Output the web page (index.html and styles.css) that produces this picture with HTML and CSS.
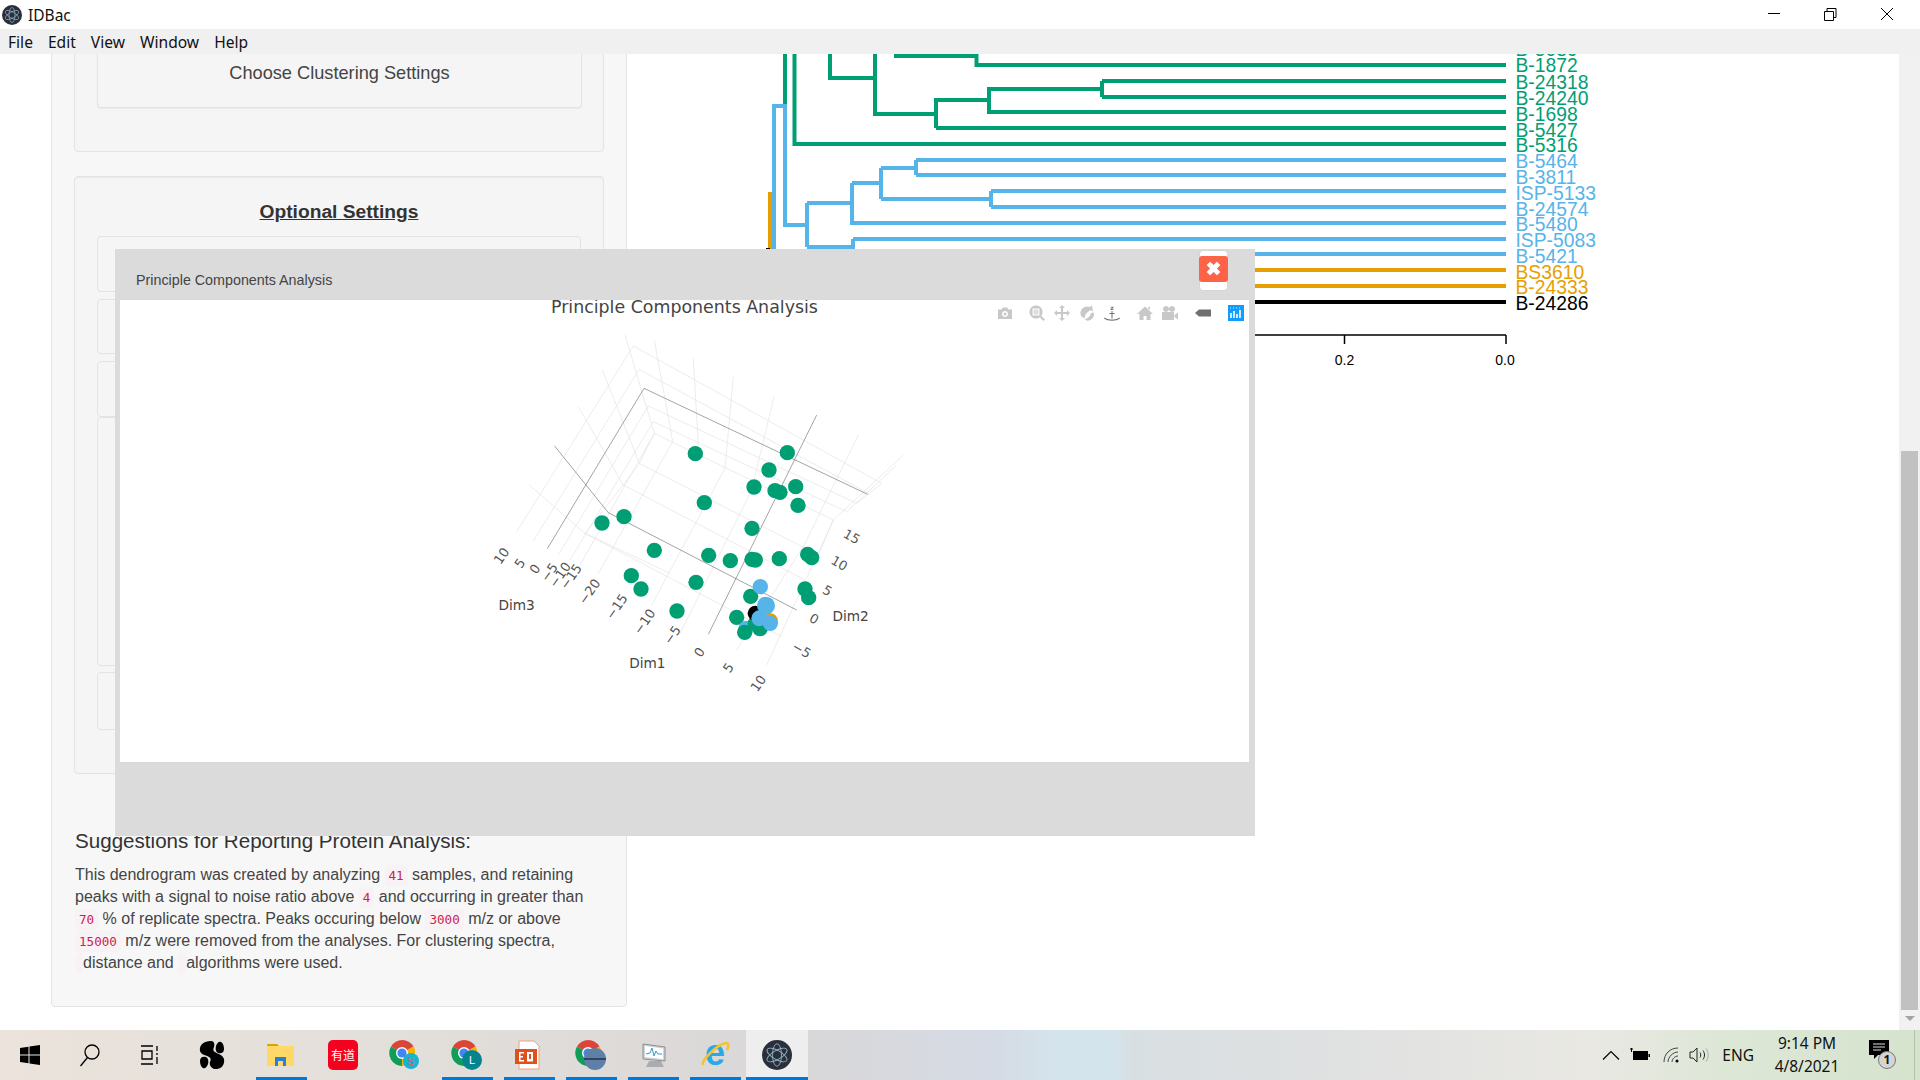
FILE: index.html
```html
<!DOCTYPE html>
<html>
<head>
  <title>IDBac</title>
  <link rel="stylesheet" href="styles.css">
</head>
<body>
  <svg class="defs" width="0" height="0">
    <symbol id="chrome" viewBox="0 0 26 26">
      <path d="M13 13 L2 6.5 A13 13 0 0 1 24.5 6.5 Z" fill="#db4437"/>
      <path d="M13 13 L24.5 6.5 A13 13 0 0 1 13 26 Z" fill="#f4b400"/>
      <path d="M13 13 L13 26 A13 13 0 0 1 2 6.5 Z" fill="#0f9d58"/>
      <circle cx="13" cy="13" r="6" fill="#fff"/>
      <circle cx="13" cy="13" r="4.6" fill="#4285f4"/>
    </symbol>
  </svg>

  <div class="container">
    <!-- Title bar -->
    <div class="title-bar">
      <svg class="app-icon" viewBox="0 0 20 20">
        <circle cx="10" cy="10" r="10" fill="#2b2e3b"/>
        <g fill="none" stroke="#8fb5c0" stroke-width="0.7">
          <ellipse cx="10" cy="10" rx="7.5" ry="3" transform="rotate(30 10 10)"/>
          <ellipse cx="10" cy="10" rx="7.5" ry="3" transform="rotate(90 10 10)"/>
          <ellipse cx="10" cy="10" rx="7.5" ry="3" transform="rotate(150 10 10)"/>
        </g>
      </svg>
      <span class="app-name">IDBac</span>
      <div class="window-controls">
        <svg viewBox="0 0 58 29" class="win-btn"><path d="M25 13.5H37" stroke="#000"/></svg>
        <svg viewBox="0 0 58 29" class="win-btn"><path d="M23.5 11.5h9v9h-9zM26 11.5V8.5h9v9h-2.500" fill="none" stroke="#000"/></svg>
        <svg viewBox="0 0 58 29" class="win-btn"><path d="M22 8L34 20M34 8L22 20" stroke="#000"/></svg>
      </div>
    </div>

    <!-- Menu bar -->
    <div class="menu-bar">
      <span>File</span>
      <span>Edit</span>
      <span>View</span>
      <span>Window</span>
      <span>Help</span>
    </div>

    <!-- Page, scrolled part way down -->
    <div class="content">
      <div class="well">
        <div class="card first-card">
          <div class="inner-card choose">Choose Clustering Settings</div>
        </div>

        <div class="card options-card">
          <h4 class="options-title">Optional Settings</h4>
          <div class="stub h56"></div>
          <div class="stub h55"></div>
          <div class="stub h56 no-gap"></div>
          <div class="stub h249"></div>
          <div class="stub h58"></div>
        </div>

        <h4 class="report-title">Suggestions for Reporting Protein Analysis:</h4>
        <p class="report-text">This dendrogram was created by analyzing <code>41</code> samples, and retaining peaks with a signal to noise ratio above <code>4</code> and occurring in greater than <code>70</code> % of replicate spectra. Peaks occuring below <code>3000</code> m/z or above <code>15000</code> m/z were removed from the analyses. For clustering spectra,<br><code></code>distance and <code></code>algorithms were used.</p>
      </div>

      <!-- Dendrogram, drawn in page coordinates -->
      <svg class="dendrogram" viewBox="627 54 1272 976">
        <g fill="none" stroke-width="4" stroke-linejoin="miter">
          <g stroke="#009E73">
            <path d="M785 54V106M794.500 54V144H1506"/>
            <path d="M830 54V78H875M875 54V114H936M936 128V100H989M936 128H1506"/>
            <path d="M989 89V112H1506M989 100V89H1102M1102 81V97M1102 81H1506M1102 97H1506"/>
            <path d="M896 54V56H976.500M976.500 54V65H1506"/>
          </g>
          <g stroke="#56B4E9">
            <path d="M774 250V106H785V225H807M807 203V247M807 203H852M852 183V223H1506"/>
            <path d="M852 183H881M881 168V199M881 168H916M916 160V175M916 160H1506M916 175H1506"/>
            <path d="M881 199H991M991 191V207M991 191H1506M991 207H1506"/>
            <path d="M807 247H853M853 239V254H1506M853 239H1506"/>
          </g>
          <g stroke="#E69F00">
            <path d="M770 192V270H1506M770 286H1506"/>
          </g>
          <path d="M768 248V302H1506" stroke="#000"/>
        </g>
        <path d="M1100 335H1506M1344.500 335V344M1506 335V344" fill="none" stroke="#000" stroke-width="1.500"/>
        <g class="axis-label">
          <text x="1344.500" y="365">0.2</text>
          <text x="1505" y="365">0.0</text>
        </g>
        <g class="leaf green">
          <text x="1515.500" y="56">B-5089</text>
          <text x="1515.500" y="72">B-1872</text>
          <text x="1515.500" y="89">B-24318</text>
          <text x="1515.500" y="105">B-24240</text>
          <text x="1515.500" y="121">B-1698</text>
          <text x="1515.500" y="137">B-5427</text>
          <text x="1515.500" y="152">B-5316</text>
        </g>
        <g class="leaf blue">
          <text x="1515.500" y="168">B-5464</text>
          <text x="1515.500" y="184">B-3811</text>
          <text x="1515.500" y="200">ISP-5133</text>
          <text x="1515.500" y="216">B-24574</text>
          <text x="1515.500" y="231">B-5480</text>
          <text x="1515.500" y="247">ISP-5083</text>
          <text x="1515.500" y="263">B-5421</text>
        </g>
        <g class="leaf orange">
          <text x="1515.500" y="279">BS3610</text>
          <text x="1515.500" y="294">B-24333</text>
        </g>
        <g class="leaf black">
          <text x="1515.500" y="310">B-24286</text>
        </g>
      </svg>

      <!-- Scrollbar -->
      <div class="scrollbar">
        <div class="scroll-thumb"></div>
        <div class="scroll-arrow"></div>
      </div>

      <!-- PCA modal -->
      <div class="modal">
        <div class="modal-head">
          <span class="modal-title">Principle Components Analysis</span>
          <button class="close-button">
            <span class="close-red">
              <svg viewBox="2.500 2.500 11 11" width="15" height="15"><path d="M3 5.500L5.500 3 8 5.500 10.500 3 13 5.500 10.500 8 13 10.500 10.500 13 8 10.500 5.500 13 3 10.500 5.500 8Z" fill="#fff"/></svg>
            </span>
          </button>
        </div>
        <div class="modal-body">
          <div class="plot-title">Principle Components Analysis</div>

          <div class="modebar">
            <svg class="tool" viewBox="0 0 16 16"><path fill-rule="evenodd" d="M1 4.500h3.500L6 2.500h4L11.500 4.500H15v9.500H1ZM8 6a3 3 0 1 0 .01 0ZM8 7.500a1.500 1.500 0 1 1-.01 0Z"/></svg>
            <svg class="tool gap-m" viewBox="0 0 16 16"><path fill-rule="evenodd" d="M7 0.500a6.500 6.500 0 1 1-.01 0ZM3.500 3.500v7h7v-7Z"/><path d="M4.500 4.500h5v5h-5Z" opacity="0.6"/><path d="M10.500 12l1.500-1.500 4 4L14.500 16Z"/></svg>
            <svg class="tool gap-s" viewBox="0 0 16 16"><path d="M8 0l3 3H9v4h4V5l3 3-3 3V9H9v4h2l-3 3-3-3h2V9H3v2L0 8l3-3v2h4V3H5Z"/></svg>
            <svg class="tool gap-s" viewBox="0 0 16 16"><path d="M13 0.500l1 6-2-1.200C9 6 6 9 5.500 13.500 2 12 0.500 9 2 5.500 3.500 2 8 0.500 11 2ZM14.500 7.500c1.500 3-.5 7-4.500 8-2.500.5-4-.5-4-1.500 3-.5 5.500-3 6-6Z"/></svg>
            <svg class="tool gap-s dark" viewBox="0 0 16 16"><text x="8" y="5" class="z-text">z</text><path d="M7.500 6h1v7.500h-1ZM5.500 8h5v1h-5ZM0.500 12.500c2 1.500 4.500 2 7.500 2s5.500-.5 7.500-2l.5 1c-2 1.500-5 2.200-8 2.200S2 15 0 13.500Z"/></svg>
            <svg class="tool gap-l" viewBox="0 0 16 16"><path d="M8 1.500l8 7.500h-2.500v6H9.500v-4h-3v4H2.500V9H0ZM11 2h2v3l-2-2Z"/></svg>
            <svg class="tool gap-s" viewBox="0 0 16 16"><path fill-rule="evenodd" d="M4 1a3 3 0 1 1-.01 0ZM10 1a3 3 0 1 1-.01 0ZM0 7h12v8H0ZM12.500 10L16 7.500v7L12.500 12Z"/></svg>
            <svg class="tool gap-l dark" viewBox="0 0 16 16"><path d="M4 4.500H16v7H4L0 8Z"/></svg>
            <svg class="tool-logo" viewBox="0 0 16 16">
              <rect width="16" height="16" fill="#119dff"/>
              <path d="M3 8v5M6 6v7M9 9v4M12 5v8" stroke="#fff" stroke-width="1.600"/>
              <path d="M2 3h12" stroke="#fff" stroke-dasharray="1 2" opacity="0.8"/>
            </svg>
          </div>

          <!-- 3D scatter, units are 1/3 px -->
          <svg class="scene" viewBox="0 0 1380 1140">
            <g class="grid3d">
              <path d="M140 635L490 78M190 663L507 148M265 705L535 258M300 720L550 305M330 735L553 340"/>
              <path d="M490 78L1235 490M507 148L1195 520M535 258L1160 550M550 305L1130 575M553 340L1090 600"/>
              <path d="M465 45L553 340M553 60L608 365M670 115L685 375M790 170L765 445M912 230L845 510M1165 345L1000 680"/>
              <path d="M397 150L508 430M325 260L460 495M178 495L345 640"/>
              <path d="M553 340L508 430L460 495L345 640"/>
              <path d="M508 430L1045 705M460 495L1005 780M345 640L935 950M345 640L600 760"/>
              <path d="M608 365L385 760M765 445L545 855M845 510L630 940M1000 680L800 990M1090 600L890 1035"/>
              <path d="M1090 600L1300 405M1045 705L1090 600M1130 575L1280 435M1160 550L1235 490"/>
            </g>
            <g class="axes3d">
              <path d="M232 686L522 205L1193 523"/>
              <path d="M253 377L415 578L980 870"/>
              <path d="M1040 285L715 943"/>
            </g>
            <g class="dots-green">
              <circle cx="676" cy="401" r="23"/><circle cx="952" cy="398" r="23"/>
              <circle cx="897" cy="450" r="23"/><circle cx="852" cy="501" r="23"/>
              <circle cx="977" cy="500" r="23"/><circle cx="915" cy="512" r="23"/>
              <circle cx="930" cy="517" r="23"/><circle cx="984" cy="556" r="23"/>
              <circle cx="703" cy="548" r="23"/><circle cx="846" cy="625" r="23"/>
              <circle cx="462" cy="590" r="23"/><circle cx="396" cy="609" r="23"/>
              <circle cx="553" cy="691" r="23"/><circle cx="716" cy="706" r="23"/>
              <circle cx="781" cy="722" r="23"/><circle cx="846" cy="718" r="23"/>
              <circle cx="856" cy="720" r="23"/><circle cx="928" cy="716" r="23"/>
              <circle cx="1013" cy="703" r="23"/><circle cx="1025" cy="713" r="23"/>
              <circle cx="484" cy="767" r="23"/><circle cx="513" cy="807" r="23"/>
              <circle cx="678" cy="787" r="23"/><circle cx="842" cy="829" r="23"/>
              <circle cx="1005" cy="807" r="23"/><circle cx="1016" cy="833" r="23"/>
              <circle cx="621" cy="873" r="23"/><circle cx="800" cy="892" r="23"/>
            </g>
            <circle cx="828" cy="925" r="23" fill="#56B4E9"/>
            <circle cx="870" cy="925" r="24" fill="#009E73"/>
            <circle cx="855" cy="910" r="22" fill="#009E73"/>
            <circle cx="856" cy="880" r="23" fill="#000"/>
            <circle cx="901" cy="903" r="23" fill="#E69F00"/>
            <circle cx="871" cy="800" r="23" fill="#56B4E9"/>
            <circle cx="888" cy="857" r="27" fill="#56B4E9"/>
            <circle cx="868" cy="895" r="24" fill="#56B4E9"/>
            <circle cx="901" cy="910" r="23" fill="#56B4E9"/>
            <circle cx="824" cy="937" r="23" fill="#009E73"/>
            <g class="ticks3d">
              <text transform="translate(95 708) rotate(-55)">10</text>
              <text transform="translate(150 730) rotate(-55)">5</text>
              <text transform="translate(195 747) rotate(-55)">0</text>
              <text transform="translate(238 757) rotate(-55)">−5</text>
              <text transform="translate(270 765) rotate(-55)">−10</text>
              <text transform="translate(303 770) rotate(-55)">−15</text>
              <text transform="translate(358 815) rotate(-55)">−20</text>
              <text transform="translate(440 860) rotate(-55)">−15</text>
              <text transform="translate(523 905) rotate(-55)">−10</text>
              <text transform="translate(607 945) rotate(-55)">−5</text>
              <text transform="translate(688 997) rotate(-55)">0</text>
              <text transform="translate(775 1043) rotate(-55)">5</text>
              <text transform="translate(865 1090) rotate(-55)">10</text>
              <text transform="translate(1145 650) rotate(30)">15</text>
              <text transform="translate(1108 730) rotate(30)">10</text>
              <text transform="translate(1072 812) rotate(30)">5</text>
              <text transform="translate(1032 897) rotate(30)">0</text>
              <text transform="translate(995 990) rotate(30)">−5</text>
            </g>
            <g class="labels3d">
              <text x="140" y="855">Dim3</text>
              <text x="532" y="1028">Dim1</text>
              <text x="1142" y="888">Dim2</text>
            </g>
          </svg>
        </div>
      </div>
    </div>

    <!-- Taskbar -->
    <div class="taskbar">
      <div class="task-item small">
        <svg width="20" height="20" viewBox="0 0 20 20"><path d="M0 3l8.500-1.200v7.700H0ZM9.500 1.600L20 0v9.500H9.500ZM0 10.500h8.500v7.700L0 17ZM9.500 10.500H20V20L9.500 18.400Z" fill="#000"/></svg>
      </div>
      <div class="task-item small">
        <svg width="22" height="24" viewBox="0 0 22 24" fill="none" stroke="#000" stroke-width="1.300"><circle cx="13" cy="9" r="7"/><path d="M8.500 14.500L1.500 23"/></svg>
      </div>
      <div class="task-item small">
        <svg width="20" height="20" viewBox="0 0 20 20" fill="none" stroke="#000" stroke-width="1.300"><path d="M1 1h12M1 19h12M2 6h10v8H2ZM17 1v5M17 8v2M17 12v7"/></svg>
      </div>
      <div class="task-item bean-item">
        <svg width="28" height="28" viewBox="0 0 28 28"><path d="M13 0C5 0 1 5 2 10c1 4 6 4 9 6 2 1 2 3 1 5-1 3 1 6 4 7 7 1 11-4 10-10-1-4-6-5-9-7-2-1-2-3-1-5 1-3 0-6-3-6Z" fill="#000"/><path d="M2 20c0-4 3-5 6-4 2 1 3 4 2 7-1 3-3 5-5 4-2-1-3-4-3-7ZM26 8c0 4-3 5-6 4-2-1-3-4-2-7 1-3 3-5 5-4 2 1 3 4 3 7Z" fill="#000"/></svg>
      </div>
      <div class="task-item running">
        <svg width="28" height="24" viewBox="0 0 28 24"><path d="M0 2a1 1 0 0 1 1-1h9l2 2h-12Z" fill="#e0a000"/><path d="M0 3h27v20H0Z" fill="#ffd867"/><path d="M8 23v-9h11v9h-3v-5h-5v5Z" fill="#2d7fd3"/></svg>
      </div>
      <div class="task-item">
        <div class="youdao">有道</div>
      </div>
      <div class="task-item">
        <svg width="32" height="30" viewBox="0 0 32 30"><use href="#chrome" x="0" y="0" width="26" height="26"/><circle cx="22" cy="21" r="8" fill="#17b4cf"/><text x="22" y="25" class="badge-text badge-red">S</text></svg>
      </div>
      <div class="task-item running">
        <svg width="32" height="30" viewBox="0 0 32 30"><use href="#chrome" x="0" y="0" width="26" height="26"/><circle cx="21" cy="20" r="10" fill="#05848f"/><text x="21" y="24" class="badge-text">L</text></svg>
      </div>
      <div class="task-item running">
        <svg width="28" height="30" viewBox="0 0 28 30"><path d="M4 1h15l5 5v23H4Z" fill="#fff" stroke="#f3a07a"/><path d="M0 9h22v15H0Z" fill="#e0501f"/><path d="M4 12h5v1.500H5.500V16H8v1.500H5.500V20H9v1.500H4ZM12 12h6v9.500h-6ZM14 14v5h2v-5Z" fill="#fff"/></svg>
      </div>
      <div class="task-item running">
        <svg width="32" height="30" viewBox="0 0 32 30"><use href="#chrome" x="0" y="0" width="26" height="26"/><circle cx="20" cy="19" r="11" fill="#5d7fa8"/><path d="M9 19h22" stroke="#2f4560" stroke-width="2"/></svg>
      </div>
      <div class="task-item running">
        <svg width="28" height="26" viewBox="0 0 28 26"><path d="M4 2l22 3v14L4 17Z" fill="#cfd3d6" stroke="#8b8f93"/><path d="M6 4l18 2.500v10.500L6 15Z" fill="#fff"/><path d="M7 12l4-1 2-5 2 8 2-5 2 3 4 0" fill="none" stroke="#3d97d3"/><path d="M10 19h12l3 6H7Z" fill="#a9adb0"/></svg>
      </div>
      <div class="task-item running">
        <svg width="30" height="30" viewBox="0 0 30 30"><text x="15" y="25" class="ie-text">e</text><path d="M3 25C1 20 18 4 26 3c3 0 3 3 1 7" fill="none" stroke="#f4c430" stroke-width="2.500"/></svg>
      </div>
      <div class="task-item active">
        <svg width="30" height="30" viewBox="0 0 20 20">
          <circle cx="10" cy="10" r="10" fill="#2b2e3b"/>
          <g fill="none" stroke="#8fb5c0" stroke-width="0.6">
            <ellipse cx="10" cy="10" rx="7.500" ry="3" transform="rotate(30 10 10)"/>
            <ellipse cx="10" cy="10" rx="7.500" ry="3" transform="rotate(90 10 10)"/>
            <ellipse cx="10" cy="10" rx="7.500" ry="3" transform="rotate(150 10 10)"/>
          </g>
        </svg>
      </div>

      <div class="spacer"></div>

      <div class="tray">
        <svg width="18" height="10" viewBox="0 0 18 10" fill="none" stroke="#000" stroke-width="1.200"><path d="M1 9.500L9 1.500l8 8"/></svg>
        <svg class="tray-battery" width="20" height="14" viewBox="0 0 20 14"><path d="M0 1h3M1.500 0v4" stroke="#000"/><path d="M3 3h15v9H3Z" fill="#000"/><path d="M18.500 6h1.500v3h-1.500Z" fill="#000"/></svg>
        <svg class="tray-wifi" width="18" height="16" viewBox="0 0 18 16" fill="none" stroke="#444"><path d="M1 15C1 7 7 1 15 1M5 15c0-5 5-10 10-10M9 15c0-3 3-6 6-6"/><circle cx="14" cy="14" r="1.500" fill="#000" stroke="none"/></svg>
        <svg class="tray-sound" width="20" height="16" viewBox="0 0 20 16" fill="none" stroke="#222"><path d="M1 5h3l4-4v14l-4-4H1ZM11 5.500c1 1.500 1 3.500 0 5M14 3.500c2 3 2 6 0 9"/><path d="M17 1.500c3 4 3 9 0 13" stroke="#aaa"/></svg>
        <span class="lang">ENG</span>
        <div class="clock">
          <div>9:14 PM</div>
          <div>4/8/2021</div>
        </div>
        <div class="notify">
          <svg width="20" height="20" viewBox="0 0 20 20"><path d="M0 0h20v15H9l-4 4v-4H0Z" fill="#000"/><path d="M4 4h12M4 7h12M4 10h8" stroke="#ddd"/></svg>
          <span class="notify-count">1</span>
        </div>
      </div>
    </div>
  </div>
</body>
</html>
```

FILE: styles.css
```css
html, body {
  margin: 0;
  padding: 0;
  height: 100%;
  overflow: hidden;
  background: #fff;
  color: #333;
  font-family: "Liberation Sans", Arial, sans-serif;
}

.defs {
  position: absolute;
}

.container {
  display: flex;
  flex-direction: column;
  height: 100vh;
}

/* Title bar */
.title-bar {
  height: 29px;
  display: flex;
  align-items: center;
  background: #fff;
  flex-shrink: 0;
}

.app-icon {
  width: 20px;
  height: 20px;
  margin-left: 2px;
}

.app-name {
  margin-left: 6px;
  font-family: "Noto Sans", sans-serif;
  font-size: 15.5px;
  color: #111;
}

.window-controls {
  margin-left: auto;
  margin-right: 3px;
  display: flex;
  align-self: flex-start;
}

.win-btn {
  width: 58px;
  height: 29px;
  display: block;
}

/* Menu bar */
.menu-bar {
  height: 25px;
  background: #f0f0f0;
  display: flex;
  align-items: center;
  gap: 15px;
  padding-left: 8px;
  font-family: "Noto Sans", sans-serif;
  font-size: 15.6px;
  color: #111;
  flex-shrink: 0;
  position: relative;
  z-index: 3;
}

/* Page */
.content {
  flex: 1;
  display: flex;
  position: relative;
  overflow: hidden;
  min-height: 0;
}

.well {
  width: 576px;
  height: 983px;
  box-sizing: border-box;
  margin: -30px 0 0 51px;
  flex-shrink: 0;
  padding: 0 22px;
  background: #f7f7f7;
  border: 1px solid #e3e3e3;
  border-radius: 4px;
}

.card {
  box-sizing: border-box;
  background: #f5f5f5;
  border: 1px solid #e3e3e3;
  border-radius: 4px;
  box-shadow: inset 0 1px 1px rgba(0, 0, 0, 0.05);
}

.first-card {
  height: 127px;
  padding: 0 21px 0 22px;
}

.inner-card {
  box-sizing: border-box;
  height: 82px;
  padding-top: 37px;
  text-align: center;
  font-size: 18.2px;
  line-height: 20px;
  color: #444;
  background: #f5f5f5;
  border: 1px solid #e3e3e3;
  border-top: none;
  border-radius: 4px;
  box-shadow: 0 1px 1px rgba(0, 0, 0, 0.05);
}

.options-card {
  margin-top: 24px;
  height: 598px;
  padding: 0 22px;
}

.options-title {
  margin: 0;
  height: 59px;
  padding-top: 25px;
  box-sizing: border-box;
  text-align: center;
  font-size: 19.2px;
  line-height: 20px;
  font-weight: bold;
  text-decoration: underline;
  color: #333;
}

.stub {
  box-sizing: border-box;
  margin-bottom: 7px;
  border: 1px solid #e3e3e3;
  border-radius: 4px;
}

.stub.no-gap {
  margin-bottom: 0;
}

.h55 { height: 55px; }
.h56 { height: 56px; }
.h58 { height: 58px; }
.h249 { height: 249px; margin-bottom: 6px; }

.report-title {
  margin: 56px 0 0 1px;
  font-weight: normal;
  font-size: 20.6px;
  line-height: 22px;
  color: #333;
}

.report-text {
  margin: 12px 0 0 1px;
  font-size: 16px;
  line-height: 22px;
  color: #444;
}

code {
  font-family: "DejaVu Sans Mono", monospace;
  font-size: 12.6px;
  line-height: 0;
  padding: 3px 4px;
  color: #c7254e;
  background: #f9f2f4;
  border-radius: 4px;
}

/* Dendrogram */
.dendrogram {
  width: 1272px;
  height: 976px;
  flex-shrink: 0;
  display: block;
}

.leaf text {
  font-size: 19.3px;
}

.leaf.green { fill: #009E73; }
.leaf.blue { fill: #56B4E9; }
.leaf.orange { fill: #E69F00; }
.leaf.black { fill: #000; }

.axis-label text {
  font-size: 14px;
  text-anchor: middle;
  fill: #000;
}

/* Scrollbar */
.scrollbar {
  width: 21px;
  flex-shrink: 0;
  background: #f1f1f1;
  display: flex;
  flex-direction: column;
  align-items: center;
  padding-top: 397px;
  box-sizing: border-box;
}

.scroll-thumb {
  width: 17px;
  height: 559px;
  background: #c1c1c1;
}

.scroll-arrow {
  margin-top: 6px;
  width: 0;
  height: 0;
  border-left: 5px solid transparent;
  border-right: 5px solid transparent;
  border-top: 5px solid #a3a3a3;
}

/* Modal */
.modal {
  position: absolute;
  left: 115px;
  top: 195px;
  width: 1140px;
  height: 587px;
  background: #dbdbdb;
}

.modal-head {
  height: 51px;
  display: flex;
  align-items: flex-end;
  position: relative;
}

.modal-title {
  margin: 0 0 12px 21px;
  font-size: 14.3px;
  line-height: 16px;
  color: #444;
}

.close-button {
  position: absolute;
  left: 1084px;
  top: 1px;
  width: 29px;
  height: 41px;
  padding: 0;
  background: #fff;
  border: 1px solid #d5d5d5;
  border-radius: 4px;
  display: flex;
  align-items: center;
  justify-content: center;
}

.close-red {
  width: 29px;
  height: 26px;
  margin-top: -4px;
  background: #ff6347;
  border-radius: 3px;
  display: flex;
  align-items: center;
  justify-content: center;
  flex-shrink: 0;
}

.modal-body {
  margin-left: 5px;
  width: 1129px;
  height: 462px;
  background: #fff;
  position: relative;
  overflow: hidden;
}

.plot-title {
  margin-left: 431px;
  font-family: "DejaVu Sans", sans-serif;
  font-size: 17.4px;
  line-height: 15px;
  color: #444;
}

.modebar {
  position: absolute;
  left: 877px;
  top: 5px;
  display: flex;
  align-items: center;
}

.tool {
  width: 16px;
  height: 16px;
  fill: #c8c8c8;
}

.tool.dark {
  fill: #707070;
}

.gap-s { margin-left: 9px; }
.gap-m { margin-left: 16px; }
.gap-l { margin-left: 17px; }

.z-text {
  font-family: "DejaVu Sans", sans-serif;
  font-size: 6px;
  font-weight: bold;
  text-anchor: middle;
}

.tool-logo {
  width: 16px;
  height: 16px;
  margin-left: 17px;
}

.scene {
  position: absolute;
  left: 350px;
  top: 20px;
  width: 460px;
  height: 380px;
}

.grid3d path {
  fill: none;
  stroke: #e2e2e2;
  stroke-width: 2;
}

.axes3d path {
  fill: none;
  stroke: #666;
  stroke-width: 1.8;
}

.dots-green {
  fill: #009E73;
}

.ticks3d text {
  font-family: "DejaVu Sans", sans-serif;
  font-size: 39px;
  fill: #555;
  text-anchor: middle;
  dominant-baseline: central;
}

.labels3d text {
  font-family: "DejaVu Sans", sans-serif;
  font-size: 41px;
  fill: #444;
  text-anchor: middle;
  dominant-baseline: central;
}

/* Taskbar */
.taskbar {
  height: 50px;
  flex-shrink: 0;
  display: flex;
  background: linear-gradient(90deg, #ebe3dc 0%, #e3dfda 20%, #d9d7d8 41.6%, #d5dbe5 52%, #d4e4ec 55%, #d4e4ec 58%, #d8dfe2 59%, #e0e1e1 70%, #e9e8e3 83%, #dde7d6 90%, #d5e3cd 100%);
}

.task-item {
  width: 62px;
  height: 50px;
  box-sizing: border-box;
  display: flex;
  align-items: center;
  justify-content: center;
  position: relative;
  flex-shrink: 0;
}

.task-item.small {
  width: 60px;
}

.bean-item {
  width: 64px;
  margin-right: 6px;
}

.task-item.running::after {
  content: '';
  position: absolute;
  left: 5.5px;
  right: 5.5px;
  bottom: 0;
  height: 3px;
  background: #0078d7;
}

.task-item.active {
  background: #eee;
  border-bottom: 3px solid #0078d7;
  padding-top: 3px;
}

.youdao {
  width: 30px;
  height: 30px;
  background: #f5001e;
  border-radius: 5px;
  color: #fff;
  font-family: "Noto Sans CJK SC", sans-serif;
  font-size: 12px;
  line-height: 30px;
  text-align: center;
  white-space: nowrap;
}

.badge-text {
  font-family: "Liberation Sans", sans-serif;
  font-size: 11px;
  fill: #fff;
  text-anchor: middle;
}

.badge-red {
  fill: #e9557a;
}

.ie-text {
  font-family: "Liberation Sans", sans-serif;
  font-size: 36px;
  font-weight: bold;
  fill: #2aa9e8;
  text-anchor: middle;
}

.spacer {
  flex: 1;
}

.tray {
  display: flex;
  align-items: center;
  font-family: "Noto Sans", sans-serif;
  color: #111;
  padding-right: 13px;
  border-right: 1px solid #b4bfae;
  margin-right: 5px;
  height: 50px;
}

.tray-battery { margin-left: 10px; }
.tray-wifi { margin-left: 13px; }
.tray-sound { margin-left: 8px; }

.lang {
  margin-left: 13px;
  font-size: 15.5px;
}

.clock {
  margin-left: 17px;
  font-size: 15.5px;
  line-height: 23px;
  text-align: center;
  width: 72px;
  white-space: nowrap;
}

.notify {
  margin-left: 26px;
  width: 32px;
  height: 30px;
  position: relative;
}

.notify-count {
  position: absolute;
  left: 9px;
  top: 11px;
  width: 18px;
  height: 18px;
  box-sizing: border-box;
  border: 1px solid #777;
  border-radius: 50%;
  background: #d4d4d4;
  font-size: 12px;
  line-height: 16px;
  text-align: center;
  font-weight: bold;
}
```
